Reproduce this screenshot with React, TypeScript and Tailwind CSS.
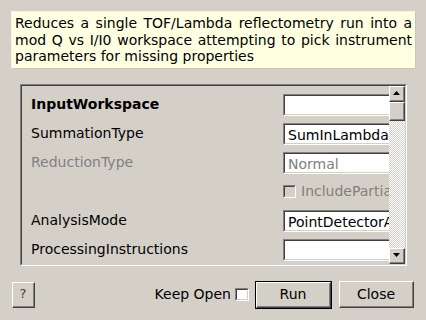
const font = "font-['DejaVu_Sans',sans-serif]";

function Sunken({ className, children }: { className?: string; children?: React.ReactNode }) {
  return (
    <div className={`border-t border-l border-t-[#808080] border-l-[#808080] border-b border-r border-b-white border-r-white ${className ?? ""}`}>
      <div className="h-full w-full border-t border-l border-t-[#404040] border-l-[#404040] border-b border-r border-b-[#d4d0c8] border-r-[#d4d0c8]">
        {children}
      </div>
    </div>
  );
}

function Raised({ className, children }: { className?: string; children?: React.ReactNode }) {
  return (
    <div className={`border-t border-l border-t-white border-l-white border-b border-r border-b-[#404040] border-r-[#404040] bg-[#d4d0c8] ${className ?? ""}`}>
      <div className="h-full w-full flex items-center justify-center border-b border-r border-b-[#808080] border-r-[#808080]">
        {children}
      </div>
    </div>
  );
}

function TextBox({ value, muted }: { value?: string; muted?: boolean }) {
  return (
    <Sunken className="w-[140px] h-[22px] bg-white shrink-0">
      <div className={`px-[3px] leading-[20px] whitespace-nowrap ${muted ? "text-[#808080]" : "text-black"}`}>{value}</div>
    </Sunken>
  );
}

function Row({ label, bold, muted, children }: { label?: string; bold?: boolean; muted?: boolean; children: React.ReactNode }) {
  return (
    <div className="flex items-center h-[22px]">
      <div className={`w-[252px] shrink-0 ${bold ? "font-bold" : ""} ${muted ? "text-[#808080]" : "text-black"}`}>{label}</div>
      {children}
    </div>
  );
}

export default function App() {
  return (
    <div className={`w-[426px] h-[320px] bg-[#d4d0c8] text-[14px] text-black overflow-hidden ${font}`}>
      {/* Description */}
      <div className="pt-[11px] pl-[11px]">
        <div className="w-[405px] bg-[#ffffe1] border border-t-[#f4f4ee] border-l-[#f4f4ee] border-b-[#c8c4bc] border-r-[#c8c4bc] px-[3px] py-[3px] leading-[16.5px] text-justify">
          Reduces a single TOF/Lambda reflectometry run into a mod Q vs I/I0 workspace attempting to pick instrument parameters for missing properties
        </div>
      </div>

      {/* Properties frame */}
      <div className="mt-[15px] ml-[20px]">
        <Sunken className="w-[387px] h-[182px]">
          <div className="flex h-full">
            <div className="flex-1 overflow-hidden pl-[9px] pt-[8px] flex flex-col gap-[7px]">
              <Row label="InputWorkspace" bold>
                <TextBox />
              </Row>
              <Row label="SummationType">
                <TextBox value="SumInLambda" />
              </Row>
              <Row label="ReductionType" muted>
                <TextBox value="Normal" muted />
              </Row>
              <Row>
                <div className="flex items-center whitespace-nowrap">
                  <Sunken className="w-[13px] h-[13px] bg-[#d4d0c8] shrink-0" />
                  <span className="ml-[5px] text-[#808080]">IncludePartialBins</span>
                </div>
              </Row>
              <Row label="AnalysisMode">
                <TextBox value="PointDetectorAnalysis" />
              </Row>
              <Row label="ProcessingInstructions">
                <TextBox />
              </Row>
            </div>

            {/* Scrollbar */}
            <div className="w-[16px] flex flex-col bg-[image:repeating-conic-gradient(#ffffff_0%_25%,#d4d0c8_0%_50%)] bg-[length:2px_2px]">
              <Raised className="h-[16px]">
                <svg width="7" height="4" viewBox="0 0 7 4"><path d="M3.5 0L7 4H0z" fill="#000" /></svg>
              </Raised>
              <Raised className="h-[19px]" />
              <div className="flex-1" />
              <Raised className="h-[16px]">
                <svg width="7" height="4" viewBox="0 0 7 4"><path d="M0 0H7L3.5 4z" fill="#000" /></svg>
              </Raised>
            </div>
          </div>
        </Sunken>
      </div>

      {/* Buttons */}
      <div className="mt-[15px] flex items-center pl-[12px] pr-[12px]">
        <Raised className="w-[23px] h-[26px]">
          <span className="text-[13px] text-[#404040]">?</span>
        </Raised>
        <div className="ml-auto flex items-center">
          <span className="mr-[4px]">Keep Open</span>
          <Sunken className="w-[14px] h-[13px] bg-white" />
          <div className="ml-[6px] border border-black">
            <Raised className="w-[75px] h-[26px]">
              <span>Run</span>
            </Raised>
          </div>
          <Raised className="ml-[7px] w-[75px] h-[27px]">
            <span>Close</span>
          </Raised>
        </div>
      </div>
    </div>
  );
}
